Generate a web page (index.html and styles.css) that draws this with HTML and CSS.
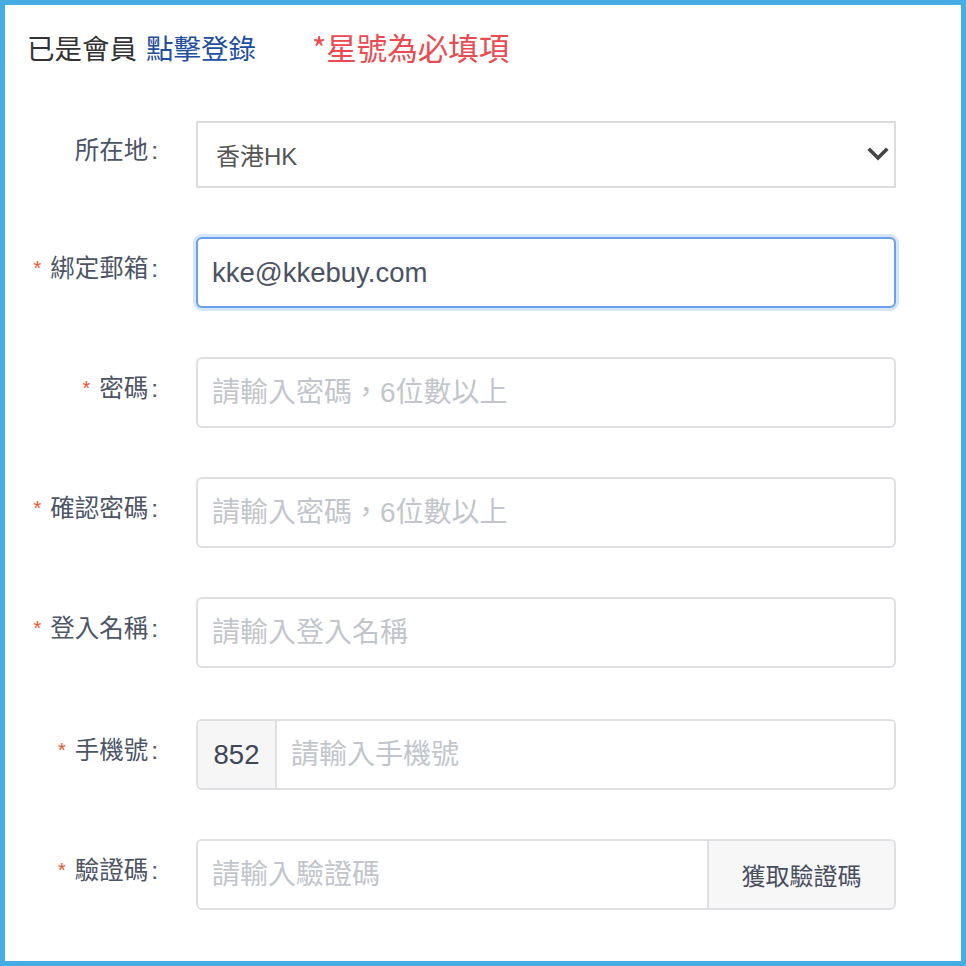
FILE: index.html
```html
<!DOCTYPE html>
<html lang="zh-Hant">
<head>
<meta charset="utf-8">
<title>註冊</title>
<link rel="stylesheet" href="styles.css">
</head>
<body>
<div class="frame">
  <div class="head">
    <span class="member">已是會員</span>
    <a class="login" href="#">點擊登錄</a>
    <span class="note">*星號為必填項</span>
  </div>
  <div class="form">
    <div class="row">
      <label class="label">所在地<span class="colon">:</span></label>
      <div class="select">
        <span>香港HK</span>
        <svg class="chev" width="22" height="14" viewBox="0 0 22 14"><polyline points="3,3 11,11 19,3" fill="none" stroke="#444" stroke-width="3.6" stroke-linecap="square"/></svg>
      </div>
    </div>
    <div class="row">
      <label class="label"><span class="req">*</span>綁定郵箱<span class="colon">:</span></label>
      <input class="input focus" type="text" value="kke@kkebuy.com">
    </div>
    <div class="row">
      <label class="label"><span class="req">*</span>密碼<span class="colon">:</span></label>
      <input class="input" type="text" placeholder="請輸入密碼，6位數以上">
    </div>
    <div class="row">
      <label class="label"><span class="req">*</span>確認密碼<span class="colon">:</span></label>
      <input class="input" type="text" placeholder="請輸入密碼，6位數以上">
    </div>
    <div class="row">
      <label class="label"><span class="req">*</span>登入名稱<span class="colon">:</span></label>
      <input class="input" type="text" placeholder="請輸入登入名稱">
    </div>
    <div class="row row-phone">
      <label class="label"><span class="req">*</span>手機號<span class="colon">:</span></label>
      <div class="group">
        <span class="prefix">852</span>
        <input class="ginput" type="text" placeholder="請輸入手機號">
      </div>
    </div>
    <div class="row">
      <label class="label"><span class="req">*</span>驗證碼<span class="colon">:</span></label>
      <div class="group">
        <input class="ginput" type="text" placeholder="請輸入驗證碼">
        <span class="btn">獲取驗證碼</span>
      </div>
    </div>
  </div>
</div>
</body>
</html>
```

FILE: styles.css
```css
html, body {
  margin: 0;
  padding: 0;
  background: #fff;
}
body {
  font-family: "Liberation Sans", "Noto Sans CJK TC", sans-serif;
}
.frame {
  box-sizing: border-box;
  width: 966px;
  height: 966px;
  border: 5px solid #45ade3;
  background: #fff;
}
.head {
  display: flex;
  align-items: center;
  height: 40px;
  padding: 22px 0 0 22px;
  font-family: "Noto Sans CJK TC", sans-serif;
}
.member {
  font-size: 27.5px;
  color: #333;
}
.login {
  font-size: 27.5px;
  color: #214d9f;
  text-decoration: none;
  margin-left: 9px;
}
.note {
  font-size: 30.5px;
  color: #ea4a50;
  margin-left: 56px;
}
.form {
  margin-top: 54px;
  display: flex;
  flex-direction: column;
  gap: 49px;
}
.row {
  display: grid;
  grid-template-columns: 153px 700px;
  column-gap: 38px;
  align-items: center;
}
.row-phone {
  margin-top: 2px;
}
.label {
  text-align: right;
  font-family: "Noto Sans CJK TC", sans-serif;
  font-size: 24.5px;
  color: #4c5466;
  padding-bottom: 13px;
  white-space: nowrap;
}
.colon {
  font-family: "Liberation Sans", sans-serif;
  margin-left: 3px;
}
.req {
  color: #ef5530;
  font-family: "Liberation Sans", sans-serif;
  font-size: 20px;
  margin-right: 9px;
  position: relative;
  top: -2px;
}
.select {
  box-sizing: border-box;
  height: 67px;
  border: 2px solid #dcdcdc;
  display: flex;
  align-items: center;
  justify-content: space-between;
  padding: 0 5px 0 18px;
  font-size: 24px;
  color: #555;
  font-family: "Liberation Sans", "Noto Sans CJK TC", sans-serif;
}
.chev {
  display: block;
  margin-top: -2px;
}
.input {
  box-sizing: border-box;
  width: 700px;
  height: 71px;
  margin: 0;
  border: 2px solid #dfdfe4;
  border-radius: 6px;
  padding: 0 14px;
  font-family: "Liberation Sans", "Noto Sans CJK TC", sans-serif;
  font-size: 28px;
  color: #4b5264;
  background: #fff;
  outline: none;
}
.input::placeholder,
.ginput::placeholder {
  color: #c2c5cc;
}
.input.focus {
  border-color: #68a0eb;
  box-shadow: 0 0 0 3px #d7e5fa;
  font-size: 27.5px;
}
.group {
  box-sizing: border-box;
  width: 700px;
  height: 71px;
  border: 2px solid #dfdfe4;
  border-radius: 6px;
  display: flex;
  overflow: hidden;
}
.prefix {
  width: 77px;
  flex: none;
  display: flex;
  align-items: center;
  justify-content: center;
  background: #f6f6f7;
  border-right: 2px solid #dfdfe4;
  font-size: 27.5px;
  color: #3f4658;
}
.ginput {
  flex: 1;
  min-width: 0;
  border: none;
  margin: 0;
  padding: 0 14px;
  font-family: "Liberation Sans", "Noto Sans CJK TC", sans-serif;
  font-size: 28px;
  color: #4b5264;
  background: #fff;
  outline: none;
}
.btn {
  width: 185px;
  flex: none;
  display: flex;
  align-items: center;
  justify-content: center;
  background: #f7f7f8;
  border-left: 2px solid #dfdfe4;
  font-family: "Noto Sans CJK TC", sans-serif;
  font-size: 24px;
  color: #484e5e;
}
```
